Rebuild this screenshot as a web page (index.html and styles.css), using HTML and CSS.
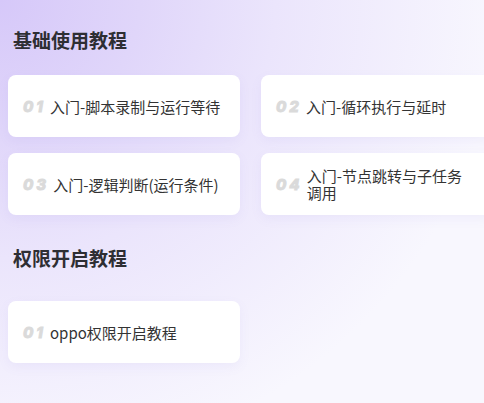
FILE: index.html
```html
<!DOCTYPE html>
<html lang="zh-CN">
<head>
<meta charset="utf-8">
<title>教程</title>
<link rel="stylesheet" href="styles.css">
</head>
<body>
<div class="page">
  <section class="section">
    <h2 class="section-title">基础使用教程</h2>
    <div class="grid">
      <div class="card"><span class="num">01</span><span class="label">入门-脚本录制与运行等待</span></div>
      <div class="card"><span class="num">02</span><span class="label">入门-循环执行与延时</span></div>
      <div class="card"><span class="num">03</span><span class="label">入门-逻辑判断(运行条件)</span></div>
      <div class="card"><span class="num">04</span><span class="label">入门-节点跳转与子任务调用</span></div>
    </div>
  </section>
  <section class="section">
    <h2 class="section-title">权限开启教程</h2>
    <div class="grid">
      <div class="card"><span class="num">01</span><span class="label">oppo权限开启教程</span></div>
    </div>
  </section>
</div>
</body>
</html>
```
FILE: styles.css
```css
html, body {
  margin: 0;
  padding: 0;
}
body {
  width: 484px;
  height: 403px;
  overflow: hidden;
  font-family: "Noto Sans CJK SC", "Noto Sans", sans-serif;
  color: #333;
  background-color: #f8f7fe;
  background-image:
    radial-gradient(ellipse 500px 470px at 0 0, #d6c8f9 0%, #e0d6fa 28%, #ebe5fc 55%, rgba(248, 247, 254, 0) 100%);
}
.page {
  width: 520px;
  padding: 26px 0 0 8px;
  display: flex;
  flex-direction: column;
  gap: 29px;
}
.section {
  display: flex;
  flex-direction: column;
}
.section-title {
  margin: 0 0 0 5px;
  font-size: 19px;
  line-height: 28px;
  font-weight: 700;
  color: #2e2e33;
}
.section:first-child .section-title {
  margin-bottom: 21px;
}
.section + .section .section-title {
  margin-bottom: 29px;
}
.grid {
  display: grid;
  grid-template-columns: 232px 232px;
  column-gap: 21px;
  row-gap: 16px;
}
.card {
  box-sizing: border-box;
  height: 62px;
  padding: 0 18px 0 15px;
  background: #fff;
  border-radius: 8px;
  box-shadow: 0 4px 12px rgba(130, 110, 210, 0.07);
  display: flex;
  align-items: center;
}
.num {
  flex: none;
  font-family: Inter, "DejaVu Sans", sans-serif;
  font-weight: 800;
  font-style: italic;
  font-size: 15px;
  letter-spacing: 3px;
  color: #dadada;
  -webkit-text-stroke: 0.8px #dadada;
  margin-right: 4px;
  line-height: 1;
}
.label {
  flex: 1;
  min-width: 0;
  font-size: 15px;
  line-height: 17px;
  color: #333;
}
```
